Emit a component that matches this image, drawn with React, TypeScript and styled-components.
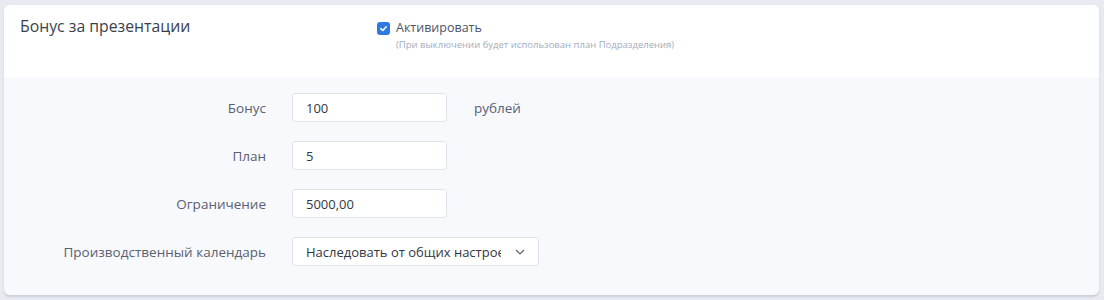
import React from "react";
import styled, { createGlobalStyle } from "styled-components";

const GlobalStyle = createGlobalStyle`
  html, body {
    margin: 0;
    padding: 0;
    background: #e7eaf1;
    font-family: "Open Sans", "Noto Sans", "Liberation Sans", sans-serif;
  }
`;

const SPage = styled.div`
  padding: 5px 5px 0 4px;
  height: 300px;
  box-sizing: border-box;
`;

const SCard = styled.div`
  background: #f7f9fd;
  border-radius: 6px;
  box-shadow: 0 2px 2px rgba(120, 130, 155, 0.25);
  overflow: hidden;
`;

const SHeader = styled.div`
  display: flex;
  align-items: flex-start;
  height: 72px;
  box-sizing: border-box;
  padding: 10px 16px 0 16px;
  background: #ffffff;
`;

const STitle = styled.div`
  width: 357px;
  font-size: 15.8px;
  line-height: 22px;
  color: #3a3f4c;
`;

const SActivate = styled.div`
  display: flex;
  flex-direction: column;
  padding-top: 4px;
`;

const SCheckRow = styled.label`
  display: flex;
  align-items: center;
  gap: 6px;
  font-size: 12.5px;
  line-height: 18px;
  color: #4d5466;
`;

const SCheckBox = styled.span`
  display: inline-flex;
  align-items: center;
  justify-content: center;
  width: 13px;
  height: 13px;
  border-radius: 3px;
  background: #2d7be0;
`;

const SHint = styled.div`
  margin-left: 19px;
  margin-top: 1px;
  font-size: 9.5px;
  line-height: 13px;
  color: #a3acbd;
`;

const SForm = styled.div`
  display: grid;
  grid-template-columns: 262px 1fr;
  column-gap: 26px;
  row-gap: 19px;
  align-items: center;
  padding: 16px 0 29px 0;
`;

const SLabel = styled.div`
  text-align: right;
  font-size: 13.5px;
  color: #5a6072;
`;

const SField = styled.div`
  display: flex;
  align-items: center;
  gap: 27px;
`;

const SInput = styled.div<{ $width?: number }>`
  display: flex;
  align-items: center;
  justify-content: space-between;
  box-sizing: border-box;
  width: ${(p) => p.$width ?? 155}px;
  height: 29px;
  padding: 0 13px 0 13px;
  background: #ffffff;
  border: 1px solid #dfe4ec;
  border-radius: 3px;
  font-size: 13px;
  color: #323744;
  white-space: nowrap;
  overflow: hidden;
`;

const SSelectText = styled.span`
  overflow: hidden;
  text-overflow: clip;
  width: 195px;
`;

const SUnit = styled.div`
  font-size: 13.5px;
  color: #5a6072;
`;

const Check = () => (
  <svg width="9" height="9" viewBox="0 0 10 10">
    <path d="M2 5.2 L4.2 7.2 L8 3" stroke="#fff" strokeWidth="1.7" fill="none" strokeLinecap="round" strokeLinejoin="round" />
  </svg>
);

const Chevron = () => (
  <svg width="10" height="6" viewBox="0 0 10 6">
    <path d="M1 1 L5 5 L9 1" stroke="#5a6072" strokeWidth="1.2" fill="none" />
  </svg>
);

export default function App() {
  return (
    <SPage>
      <GlobalStyle />
      <SCard>
        <SHeader>
          <STitle>Бонус за презентации</STitle>
          <SActivate>
            <SCheckRow>
              <SCheckBox>
                <Check />
              </SCheckBox>
              Активировать
            </SCheckRow>
            <SHint>(При выключении будет использован план Подразделения)</SHint>
          </SActivate>
        </SHeader>
        <SForm>
          <SLabel>Бонус</SLabel>
          <SField>
            <SInput>100</SInput>
            <SUnit>рублей</SUnit>
          </SField>

          <SLabel>План</SLabel>
          <SField>
            <SInput>5</SInput>
          </SField>

          <SLabel>Ограничение</SLabel>
          <SField>
            <SInput>5000,00</SInput>
          </SField>

          <SLabel>Производственный календарь</SLabel>
          <SField>
            <SInput $width={247}>
              <SSelectText>Наследовать от общих настроек</SSelectText>
              <Chevron />
            </SInput>
          </SField>
        </SForm>
      </SCard>
    </SPage>
  );
}
